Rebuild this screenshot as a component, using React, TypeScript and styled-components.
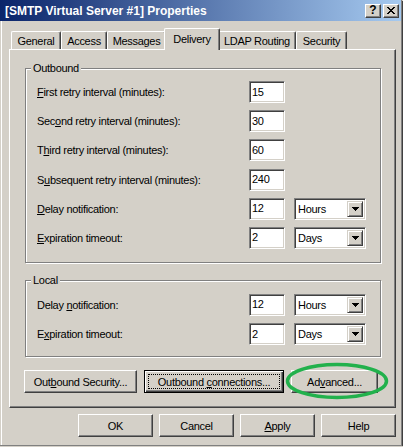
import React from 'react';
import styled, { createGlobalStyle, css } from 'styled-components';

const FACE = '#d4d0c8';
const SHADOW = '#808080';
const DARK = '#404040';
const HILITE = '#ffffff';

const GlobalStyle = createGlobalStyle`
  html, body { margin: 0; padding: 0; background: ${FACE}; }
  * { box-sizing: border-box; }
`;

const Window = styled.div`
  width: 402px;
  height: 446px;
  display: flex;
  flex-direction: column;
  background: ${FACE};
  border-right: 1px solid ${SHADOW};
  border-bottom: 1px solid ${SHADOW};
  box-shadow: 1px 1px 0 ${DARK};
  font-family: "Liberation Sans", Arial, sans-serif;
  font-size: 11px;
  letter-spacing: -0.3px;
  color: #000;
`;

const TitleBar = styled.div`
  flex: none;
  height: 21px;
  display: flex;
  align-items: center;
  gap: 2px;
  padding: 0 2px 0 5px;
  background: linear-gradient(to right, #0a246a, #a6caf0);
`;

const TitleText = styled.div`
  flex: 1;
  color: #fff;
  font-weight: bold;
  font-size: 12px;
  letter-spacing: 0;
  white-space: nowrap;
`;

const CaptionButton = styled.div`
  width: 16px;
  height: 14px;
  display: flex;
  align-items: center;
  justify-content: center;
  background: ${FACE};
  border: 1px solid;
  border-color: ${HILITE} ${DARK} ${DARK} ${HILITE};
  box-shadow: inset -1px -1px 0 ${SHADOW};
  font-weight: bold;
  font-size: 12px;
  letter-spacing: 0;
  line-height: 12px;
  padding-bottom: 1px;
`;

const Body = styled.div`
  flex: 1;
  display: flex;
  flex-direction: column;
  padding: 7px 5px 0 9px;
  box-shadow: inset 1px 0 0 ${FACE}, inset 2px 0 0 ${HILITE};
`;

const TabStrip = styled.div`
  flex: none;
  height: 21px;
  display: flex;
  align-items: flex-end;
  padding-left: 2px;
  position: relative;
  z-index: 1;
`;

const Tab = styled.div<{ $w: number; $active?: boolean }>`
  width: ${(p) => p.$w}px;
  height: 18px;
  display: flex;
  align-items: center;
  justify-content: center;
  white-space: nowrap;
  background: ${FACE};
  border-top: 1px solid ${HILITE};
  border-left: 1px solid ${HILITE};
  border-right: 1px solid ${DARK};
  border-top-left-radius: 2px;
  border-top-right-radius: 2px;
  box-shadow: inset -1px 0 0 ${SHADOW};
  ${(p) =>
    p.$active &&
    css`
      height: 22px;
      width: ${p.$w + 4}px;
      margin: 0 -2px -1px;
      padding-bottom: 2px;
      position: relative;
      z-index: 2;
    `}
`;

const Panel = styled.div`
  flex: none;
  display: flex;
  flex-direction: column;
  border: 1px solid;
  border-color: ${HILITE} ${DARK} ${DARK} ${HILITE};
  box-shadow: inset -1px -1px 0 ${SHADOW};
  padding: 12px 14px 14px 15px;
`;

const Group = styled.fieldset<{ $gapTop?: number; $padTop: number; $padBottom: number }>`
  margin: ${(p) => p.$gapTop ?? 0}px 0 0 0;
  padding: ${(p) => p.$padTop}px 0 ${(p) => p.$padBottom}px 0;
  min-width: 0;
  border: 1px solid ${SHADOW};
  box-shadow: inset 1px 1px 0 ${HILITE}, 1px 1px 0 ${HILITE};
`;

const Legend = styled.legend`
  margin-left: 5px;
  padding: 0 2px;
  line-height: 13px;
  background: ${FACE};
`;

const Rows = styled.div`
  display: grid;
  grid-template-columns: 203px 36px 72px;
  grid-auto-rows: 22px;
  column-gap: 9px;
  row-gap: 7.2px;
  padding-left: 11px;
`;

const Label = styled.span`
  grid-column: 1;
  align-self: center;
  white-space: nowrap;
`;

const Key = styled.u`
  text-decoration: underline;
  text-underline-offset: 1px;
`;

const TextBox = styled.input`
  grid-column: 2;
  width: 36px;
  height: 22px;
  margin: 0;
  padding: 0 1px 1px 2px;
  border: 1px solid;
  border-color: ${SHADOW} ${HILITE} ${HILITE} ${SHADOW};
  box-shadow: inset 1px 1px 0 ${DARK}, inset -1px -1px 0 ${FACE};
  background: #fff;
  font: inherit;
  letter-spacing: inherit;
  color: #000;
  outline: none;
`;

const Combo = styled.div`
  grid-column: 3;
  height: 22px;
  display: flex;
  align-items: stretch;
  padding: 2px;
  background: #fff;
  border: 1px solid;
  border-color: ${SHADOW} ${HILITE} ${HILITE} ${SHADOW};
  box-shadow: inset 1px 1px 0 ${DARK}, inset -1px -1px 0 ${FACE};
`;

const ComboText = styled.span`
  flex: 1;
  display: flex;
  align-items: center;
  padding-left: 1px;
`;

const DropButton = styled.span`
  width: 16px;
  display: flex;
  align-items: center;
  justify-content: center;
  background: ${FACE};
  border: 1px solid;
  border-color: ${FACE} ${DARK} ${DARK} ${FACE};
  box-shadow: inset 1px 1px 0 ${HILITE}, inset -1px -1px 0 ${SHADOW};
`;

const ActionRow = styled.div`
  display: flex;
  gap: 7px;
  margin: 13px 0 0 -1px;
`;

const Button = styled.button<{ $w: number; $default?: boolean }>`
  position: relative;
  width: ${(p) => p.$w}px;
  height: 23px;
  margin: 0;
  padding: 0;
  font: inherit;
  letter-spacing: inherit;
  color: #000;
  background: ${FACE};
  border: 1px solid;
  border-color: ${HILITE} ${DARK} ${DARK} ${HILITE};
  box-shadow: inset -1px -1px 0 ${SHADOW};
  ${(p) =>
    p.$default &&
    css`
      border-color: #000;
      box-shadow: inset 1px 1px 0 ${HILITE}, inset -1px -1px 0 ${DARK},
        inset -2px -2px 0 ${SHADOW};
      &::after {
        content: '';
        position: absolute;
        inset: 3px;
        border: 1px dotted #000;
      }
    `}
`;

const Annotated = styled.div`
  position: relative;
  display: flex;
`;

const Ring = styled.svg`
  position: absolute;
  left: -6px;
  top: -8px;
  pointer-events: none;
`;

const DialogButtons = styled.div`
  display: flex;
  justify-content: flex-end;
  gap: 6px;
  margin-top: 6px;
`;

function mn(text: string) {
  const i = text.indexOf('&');
  if (i < 0) return text;
  return (
    <>
      {text.slice(0, i)}
      <Key>{text[i + 1]}</Key>
      {text.slice(i + 2)}
    </>
  );
}

const Arrow = () => (
  <svg width="7" height="4" viewBox="0 0 7 4" shapeRendering="crispEdges">
    <rect x="0" y="0" width="7" height="1" fill="#000" />
    <rect x="1" y="1" width="5" height="1" fill="#000" />
    <rect x="2" y="2" width="3" height="1" fill="#000" />
    <rect x="3" y="3" width="1" height="1" fill="#000" />
  </svg>
);

const CloseGlyph = () => {
  const rows = [
    [0, 6],
    [1, 5],
    [2, 4],
    [3, 3],
    [2, 4],
    [1, 5],
    [0, 6],
  ];
  return (
    <svg width="8" height="7" viewBox="0 0 8 7" shapeRendering="crispEdges">
      {rows.map(([a, b], y) => (
        <React.Fragment key={y}>
          <rect x={a} y={y} width="2" height="1" fill="#000" />
          <rect x={b} y={y} width="2" height="1" fill="#000" />
        </React.Fragment>
      ))}
    </svg>
  );
};

type Row = { label: string; value: string; unit?: string };

const outbound: Row[] = [
  { label: '&First retry interval (minutes):', value: '15' },
  { label: 'Sec&ond retry interval (minutes):', value: '30' },
  { label: 'T&hird retry interval (minutes):', value: '60' },
  { label: 'S&ubsequent retry interval (minutes):', value: '240' },
  { label: '&Delay notification:', value: '12', unit: 'Hours' },
  { label: '&Expiration timeout:', value: '2', unit: 'Days' },
];

const local: Row[] = [
  { label: 'Delay &notification:', value: '12', unit: 'Hours' },
  { label: 'E&xpiration timeout:', value: '2', unit: 'Days' },
];

const tabs = [
  { name: 'General', w: 50 },
  { name: 'Access', w: 46 },
  { name: 'Messages', w: 59 },
  { name: 'Delivery', w: 52, active: true },
  { name: 'LDAP Routing', w: 78 },
  { name: 'Security', w: 51 },
];

function FieldRows({ rows }: { rows: Row[] }) {
  return (
    <Rows>
      {rows.map((r, i) => (
        <React.Fragment key={i}>
          <Label>{mn(r.label)}</Label>
          <TextBox readOnly defaultValue={r.value} />
          {r.unit && (
            <Combo>
              <ComboText>{r.unit}</ComboText>
              <DropButton>
                <Arrow />
              </DropButton>
            </Combo>
          )}
        </React.Fragment>
      ))}
    </Rows>
  );
}

export default function App() {
  return (
    <>
      <GlobalStyle />
      <Window>
        <TitleBar>
          <TitleText>[SMTP Virtual Server #1] Properties</TitleText>
          <CaptionButton>?</CaptionButton>
          <CaptionButton>
            <CloseGlyph />
          </CaptionButton>
        </TitleBar>
        <Body>
          <TabStrip>
            {tabs.map((t) => (
              <Tab key={t.name} $w={t.w} $active={t.active}>
                {t.name}
              </Tab>
            ))}
          </TabStrip>
          <Panel>
            <Group $padTop={6} $padBottom={13}>
              <Legend>Outbound</Legend>
              <FieldRows rows={outbound} />
            </Group>
            <Group $gapTop={11} $padTop={7} $padBottom={11}>
              <Legend>Local</Legend>
              <FieldRows rows={local} />
            </Group>
            <ActionRow>
              <Button $w={113}>{mn('Out&bound Security...')}</Button>
              <Button $w={140} $default>
                {mn('Outbound &connections...')}
              </Button>
              <Annotated>
                <Button $w={87}>{mn('Ad&vanced...')}</Button>
                <Ring width="106" height="38" viewBox="0 0 106 38">
                  <ellipse
                    cx="52"
                    cy="19"
                    rx="49.5"
                    ry="16.5"
                    fill="none"
                    stroke="#22b14c"
                    strokeWidth="3.5"
                  />
                </Ring>
              </Annotated>
            </ActionRow>
          </Panel>
          <DialogButtons>
            <Button $w={75}>OK</Button>
            <Button $w={75}>Cancel</Button>
            <Button $w={75}>{mn('&Apply')}</Button>
            <Button $w={75}>Help</Button>
          </DialogButtons>
        </Body>
      </Window>
    </>
  );
}
